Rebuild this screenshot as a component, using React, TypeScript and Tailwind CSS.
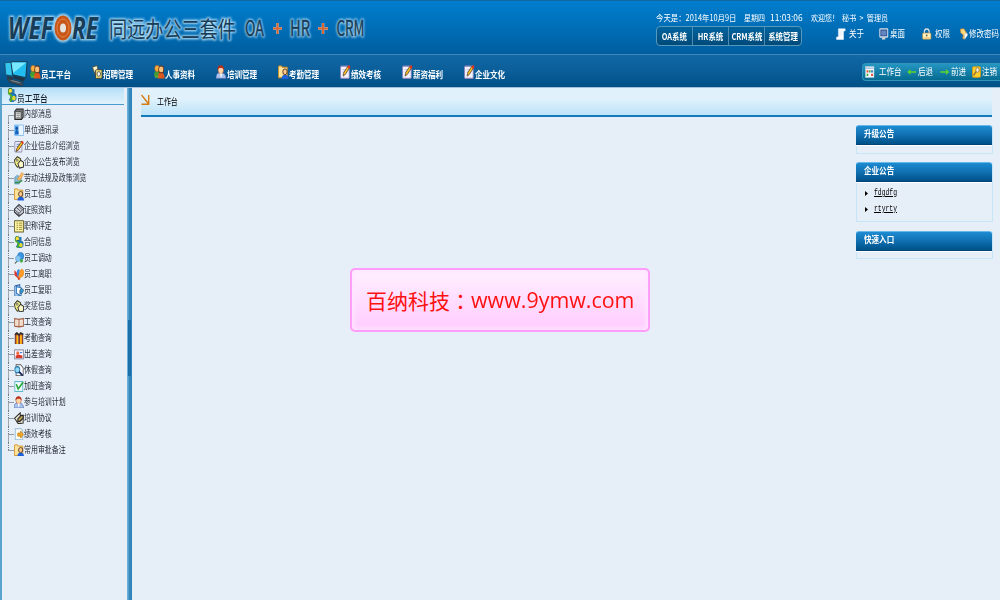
import React from 'react';

type IconName =
  | 'people' | 'badge' | 'worker' | 'folder' | 'note' | 'drive' | 'card' | 'pencil' | 'tags' | 'brush'
  | 'box' | 'sheet' | 'snake' | 'pin' | 'butterfly' | 'page' | 'book' | 'gift' | 'photo' | 'search'
  | 'check' | 'pen' | 'arrowpage' | 'scroll' | 'monitor' | 'lock' | 'hand' | 'grid' | 'left' | 'right' | 'key';

const shapes: Record<IconName, React.ReactNode> = {
  people: (<>
    <path d="M0 9.5c0-4 2-5 4-5s3 2 3 5z" fill="#3f9b35" /><circle cx="3.5" cy="3" r="2.7" fill="#f7b13c" stroke="#a0522d" strokeWidth=".6" />
    <path d="M4 11.5c0-4 2-5 4-5s4 1 4 5z" fill="#e0571c" /><circle cx="8.2" cy="3.8" r="2.9" fill="#f4c27c" stroke="#6b2c10" strokeWidth=".9" />
    <path d="M1 11h4V9H1z" fill="#5bab3d" />
  </>),
  badge: (<>
    <path d="M.5 2l5-1.5 3 7-4.5 1.5z" fill="#fff6cf" stroke="#4d4a31" strokeWidth=".8" /><rect x="4" y="4" width="7.5" height="7.5" rx="1" fill="#e8d973" stroke="#333" strokeWidth=".8" />
    <circle cx="7.7" cy="7.7" r="2" fill="#fff" stroke="#444" strokeWidth=".8" />
  </>),
  worker: (<>
    <path d="M0 11.5c0-4 2-5 5.5-5s6 2 6 5z" fill="#a9c2ec" stroke="#4a62a8" strokeWidth=".6" /><circle cx="5.5" cy="4.3" r="3.2" fill="#ffd5a5" stroke="#963c1d" strokeWidth=".5" />
    <path d="M1.7 4c0-5 7.5-5 7.5 0L7 2.6H4z" fill="#b92e18" /><path d="M4.5 7.3l1.3 4 1.3-4" fill="#fff" />
  </>),
  folder: (<>
    <path d="M.5 2V11h10V2H5L4 .8H1z" fill="#ffe29a" stroke="#d08a18" strokeWidth=".9" /><path d="M4 12c0-5 8-5 8 0z" fill="#1b60dc" /><circle cx="8" cy="5.8" r="2.5" fill="#ffc98a" stroke="#382116" strokeWidth=".8" />
  </>),
  note: (<>
    <rect x=".7" y="1" width="9.8" height="10.5" rx="1" fill="#f4f3ff" stroke="#8c86bd" /><path d="M3 4h5M3 6h4" stroke="#aaa6d0" strokeWidth=".7" />
    <path d="M3.5 9.5l.8-3L9 1l1.8 1.6L6 8.2z" fill="#f9bd26" stroke="#453426" strokeWidth=".7" /><circle cx="10.3" cy="1.7" r="1.5" fill="#e23420" />
  </>),
  drive: (<><path d="M1 3l2-2h8v8l-2 2H1z" fill="#777" stroke="#222" /><path d="M1.5 3.5h7v7h-7z" fill="#e5e5e5" stroke="#333" strokeWidth=".8" /><path d="M3 5h4M3 7h4M3 9h4" stroke="#555" strokeWidth=".8" /></>),
  card: (<><rect x=".5" y="1" width="11" height="10" rx=".8" fill="#eaf4ff" stroke="#8abfee" /><path d="M1 1.5h4.5v9H1z" fill="#4ca2eb" /><circle cx="3.3" cy="4.2" r="1.4" fill="#174a91" /><path d="M1.3 9.5c0-5 4.2-5 4.2 0z" fill="#1760bb" /></>),
  pencil: (<><rect x="1" y="1.5" width="8.5" height="10" rx="1" fill="#eeeef8" stroke="#8989ac" /><path d="M3 4h5M3 6h4" stroke="#6c86cf" /><path d="M2.5 11l1-3L9 1.5l2 1.5-5.5 6.5z" fill="#ffc21c" stroke="#4d3320" strokeWidth=".8" /><path d="M8.5 2L10 .6l1.7 1.6L10.5 4z" fill="#e5351e" /></>),
  tags: (<><path d="M.5 4L4 .7l4 2v6.8l-4 1.2L1.5 8z" fill="#f5ef83" stroke="#353525" /><path d="M4.7 7.3L8 4l3.4 2v4.5L6.5 11.5z" fill="#fffac9" stroke="#333" strokeWidth="1.1" /><circle cx="3.7" cy="4" r="1.1" fill="#fff" stroke="#333" strokeWidth=".7" /></>),
  brush: (<><path d="M1 5l3-2 5 3-3 5.5H1z" fill="#82b9d9" stroke="#5b8ca5" strokeWidth=".7" /><path d="M4 7L9.5 .5 11.5 2 7 8z" fill="#ffbc62" stroke="#d58d3c" strokeWidth=".7" /><path d="M1 10h5l4-2" stroke="#35914b" strokeWidth="1.4" fill="none" /></>),
  box: (<><path d="M.5 5L6 .5l5.7 4v3.5L6 11.8.5 8z" fill="#d6d9e0" stroke="#26282c" /><path d="M1 5.5l5 3.5 5.5-4.5M6 9v2.5M3 3.5l5 3.5M5 2l5 3.5M1 7.5l5 3.3" stroke="#3b3e48" fill="none" strokeWidth=".9" /></>),
  sheet: (<><path d="M.7 .7h10.6v10.8H.7z" fill="#fff7a4" stroke="#645d28" /><path d="M3 3h2M6 3h4M3 5h2M6 5h4M3 7h2M6 7h4M3 9h2M6 9h4" stroke="#8d7c2f" strokeWidth=".9" /></>),
  snake: (<><circle cx="4" cy="2.7" r="2.5" fill="#ffde3d" stroke="#287a37" strokeWidth=".9" /><path d="M3 4.5l2 2-2 4L6.5 12l4.3-2V6L7.5 4z" fill="#187fc1" stroke="#174d8d" strokeWidth=".8" /><path d="M1.5 4L5.5 7l-1 4 3-3" fill="none" stroke="#50ad2c" strokeWidth="1.8" /><circle cx="8.3" cy="8.7" r="2.1" fill="#e5d72c" /><path d="M6 1h3v3H7z" fill="#2577b8" /></>),
  pin: (<><path d="M1 11l5-4" stroke="#666" strokeWidth="1.3" /><circle cx="8" cy="4" r="3.6" fill="#3997e6" stroke="#1b66a7" strokeWidth=".7" /><circle cx="4.8" cy="6.3" r="3" fill="#84c7f6" stroke="#4b91c2" strokeWidth=".5" /><path d="M7.5 7c5-1 4 4 0 3z" fill="#42ad3a" /></>),
  butterfly: (<><path d="M5 10L.5 7V2L5 6z" fill="#e1372a" /><path d="M5 10C1 4 5-1 7 2z" fill="#3686e6" /><path d="M5 10.5L7 3c3-5 7 1 3.5 5z" fill="#ff9b25" stroke="#dd7916" strokeWidth=".5" /><path d="M4 7.5l4 3-3 1.5z" fill="#e44c25" /></>),
  page: (<><path d="M1 2l6-1.3v10.5L1 12z" fill="#b9dcff" stroke="#265da3" /><path d="M3 2.5l5.5 1v7.8L3 9z" fill="#fff" stroke="#3479bd" strokeWidth="1.1" /><path d="M7 6l2.3-2 2.5 2-2.3 3H7z" fill="#3596ce" stroke="#34516e" strokeWidth=".7" /></>),
  book: (<><path d="M.8 2.5L6 3.2l5.2-.7v7.3L6 10.3.8 9.8z" fill="#fff8ea" stroke="#a5644b" strokeWidth="1.3" /><path d="M6 3v7" stroke="#a5644b" strokeWidth="1.3" /><path d="M3.5 4v5M8.5 4v5" stroke="#e0b79d" /></>),
  gift: (<><path d="M1.5 2.5H5V11.5H1.5zM6 2.5h4.5v9H6z" fill="#d93424" stroke="#402b20" strokeWidth=".8" /><path d="M4 3v8.5M8.3 3v8.5" stroke="#ffc319" strokeWidth="2" /><path d="M1 2.5l2.5-1.7 2.5 2 2-2 3.3 1.5" stroke="#302420" strokeWidth="1.4" fill="none" /></>),
  photo: (<><rect x=".7" y="1.8" width="10.6" height="8.6" fill="#f8f7ff" stroke="#8d879b" /><path d="M2 9.5V7.5l3-1.3 5 1v2.3z" fill="#db3827" /><circle cx="4.5" cy="5" r="1.8" fill="#f06a49" /><path d="M7 4.4h3" stroke="#4180c5" /></>),
  search: (<><path d="M2.5 .7H8l3 3v7.6H2.5z" fill="#fff" stroke="#555" /><circle cx="4" cy="5.5" r="3" fill="#91d8f7" stroke="#2778ac" /><path d="M6 7.5l4.5 3.7" stroke="#172a61" strokeWidth="2" /></>),
  check: (<><rect x="1" y="1.5" width="9.5" height="9.5" fill="#effaff" stroke="#5db7c8" /><path d="M2.7 4l2.3 4.5 6-6.5" stroke="#29a830" strokeWidth="1.8" fill="none" /></>),
  pen: (<><path d="M.7 6L7.5 .8v2.3l3.5.5v7L5 11.2z" fill="#f2efdb" stroke="#343434" strokeWidth="1.2" /><path d="M4.5 6.5l3.5-3 3-.5v3L7.5 9l-3 .5z" fill="#7f7353" stroke="#25221c" /><path d="M6 7.5l4-3" stroke="#e1c252" /></>),
  arrowpage: (<><path d="M1.5 .7h7l2 2v8.6h-9z" fill="#fffdf3" stroke="#93b9dc" /><path d="M11.3 6.3L8 9.8V7.8H4.5V4.8H8v-2z" fill="#f2a827" stroke="#b87915" strokeWidth=".7" /></>),
  scroll: (<><path d="M3 .8h8.5V3H9.5v8.5H.7V9H3z" fill="#fff" stroke="#d5e7fa" strokeWidth=".7" /><path d="M4 3h4M4 5h4M4 7h4" stroke="#c3d5e9" strokeWidth=".6" /></>),
  monitor: (<><rect x="1" y=".8" width="10" height="8.2" rx=".5" fill="#335d98" stroke="#d4dbe9" strokeWidth="1.3" /><path d="M3 2.7h6v4.5H3z" fill="#6586c0" /><path d="M4 9.4h4v2H3.5z" fill="#d8d6ce" /></>),
  lock: (<><path d="M3 6V3.5c0-3.5 6-3.5 6 0V6" fill="none" stroke="#ddd" strokeWidth="1.5" /><rect x=".7" y="5" width="10.6" height="6.3" rx="1" fill="#fff1bd" stroke="#a88c42" strokeWidth=".7" /><path d="M2 10h8" stroke="#ddae55" /><circle cx="6" cy="7.5" r="1" fill="#69533a" /></>),
  hand: (<><path d="M.5 1L6 .8l4 4.5-4 6-2-1 1-3.3-4-2.3z" fill="#ffd77b" stroke="#bd7931" strokeWidth=".7" /><path d="M7 6l3.5-1 1 2-4.5 4.5z" fill="#fff" stroke="#a9b6bf" strokeWidth=".5" /></>),
  grid: (<><rect x=".7" y=".7" width="10.6" height="10.6" fill="#f5fbff" stroke="#bdd5df" strokeWidth=".7" /><path d="M1 2.2h10" stroke="#a9bfdc" strokeWidth="1.4" /><path d="M2 4.3h2.2v2.3H2zM7.7 7.8H10v2.3H7.7z" fill="#e44a2c" /><path d="M4.9 4.3h2.2v2.3H4.9zM2 7.8h2.2v2.3H2z" fill="#4da54c" /><path d="M7.7 4.3H10v2.3H7.7z" fill="#377fc7" /></>),
  left: <path d="M11.5 6H1.5M4.5 3.8L1.5 6l3 2.2" fill="none" stroke="#5ed72b" strokeWidth="1.3" />,
  right: <path d="M.5 6h10M7.5 3.8l3 2.2-3 2.2" fill="none" stroke="#5ed72b" strokeWidth="1.3" />,
  key: (<><rect x=".8" y=".8" width="10.4" height="10.5" rx="1" fill="#ffd12e" stroke="#db990e" /><path d="M2 9.5L6 5" stroke="#906b31" strokeWidth="1.7" /><circle cx="7.3" cy="4" r="2.3" fill="#fff4d7" stroke="#8a744c" /></>),
};

function Icon({ name, className }: { name: IconName; className: string }) {
  return <svg viewBox="0 0 12 12" preserveAspectRatio="none" className={`shrink-0 ${className}`}>{shapes[name]}</svg>;
}

const tabs: [string, IconName][] = [
  ['员工平台', 'people'], ['招聘管理', 'badge'], ['人事资料', 'people'], ['培训管理', 'worker'],
  ['考勤管理', 'folder'], ['绩效考核', 'note'], ['薪资福利', 'note'], ['企业文化', 'note'],
];

const menu: [string, IconName][] = [
  ['内部消息', 'drive'], ['单位通讯录', 'card'], ['企业信息介绍浏览', 'pencil'], ['企业公告发布浏览', 'tags'],
  ['劳动法规及政策浏览', 'brush'], ['员工信息', 'folder'], ['证照资料', 'box'], ['职称评定', 'sheet'],
  ['合同信息', 'snake'], ['员工调动', 'pin'], ['员工离职', 'butterfly'], ['员工复职', 'page'],
  ['奖惩信息', 'tags'], ['工资查询', 'book'], ['考勤查询', 'gift'], ['出差查询', 'photo'],
  ['休假查询', 'search'], ['加班查询', 'check'], ['参与培训计划', 'worker'], ['培训协议', 'pen'],
  ['绩效考核', 'arrowpage'], ['常用审批备注', 'folder'],
];

function Logo() {
  return (
    <svg viewBox="0 0 370 50" className="h-[50px] w-[370px] shrink-0">
      <defs>
        <filter id="glow" x="-10%" y="-30%" width="120%" height="160%"><feGaussianBlur stdDeviation=".9" /></filter>
        <g id="brand" fontFamily="Open Sans, sans-serif" fontWeight="700" fontStyle="italic" fontSize="31">
          <text x="8" y="38" textLength="45" lengthAdjust="spacingAndGlyphs">WEF</text>
          <text x="72" y="38" textLength="26" lengthAdjust="spacingAndGlyphs">RE</text>
        </g>
        <g id="suite" fontFamily="Noto Sans CJK SC, sans-serif" fontSize="22">
          <text x="109" y="35.5" textLength="127" lengthAdjust="spacingAndGlyphs">同远办公三套件</text>
        </g>
        <g id="latin" fontFamily="Noto Sans CJK SC, sans-serif" fontSize="22">
          <text x="245" y="35" textLength="19" lengthAdjust="spacingAndGlyphs">OA</text>
          <text x="290" y="35" textLength="20" lengthAdjust="spacingAndGlyphs">HR</text>
          <text x="336.5" y="35" textLength="28" lengthAdjust="spacingAndGlyphs">CRM</text>
        </g>
      </defs>
      <g stroke="#b5e2fb" strokeWidth="2.4" fill="#b5e2fb" filter="url(#glow)" opacity=".95" aria-hidden="true">
        <use href="#brand" /><use href="#suite" /><use href="#latin" />
        <ellipse cx="63" cy="27" rx="9" ry="13" />
      </g>
      <g fill="#173d59"><use href="#brand" /><use href="#suite" stroke="#173d59" strokeWidth=".1" /><use href="#latin" stroke="#173d59" strokeWidth=".5" /></g>
      <ellipse cx="63" cy="27" rx="8.5" ry="12.5" fill="#c75619" />
      <ellipse cx="63" cy="27" rx="6" ry="9" fill="none" stroke="#ef8b4b" strokeWidth=".8" />
      <ellipse cx="63" cy="27" rx="3" ry="4.5" fill="#e7e4df" />
      <path d="M273 27.5h9M277.5 22v11M318 27.5h10M323 22v11" stroke="#9fc5dd" strokeWidth="2.8" />
      <path d="M273 27.5h9M277.5 22v11M318 27.5h10M323 22v11" stroke="#dc632a" strokeWidth="1.9" />
    </svg>
  );
}

function Computers() {
  return (
    <svg viewBox="0 0 28 30" preserveAspectRatio="none" className="h-[28px] w-[26px] shrink-0">
      <path d="M2 4l8-.5v14.5L3 17z" fill="#35c6ef" stroke="#17425d" strokeWidth=".7" />
      <path d="M4 18l7 1.5v4l-6-1z" fill="#253c4b" />
      <path d="M8.5 3L26 3l-1.5 17-14-3z" fill="#22bdee" stroke="#152f44" />
      <path d="M9.3 3.8L25 3.8 11 15z" fill="#77e8ff" />
      <path d="M11 18l13 2.7-1.5 3.3-11-3z" fill="#203543" />
      <path d="M4.5 21L21.5 25 21 29 7 25z" fill="#3f4d57" stroke="#24394a" strokeWidth=".7" />
      <path d="M9 23l9 2.3" stroke="#9aa4aa" strokeWidth=".8" />
    </svg>
  );
}

function Utility({ icon, text, className }: { icon: IconName; text: string; className: string }) {
  return (
    <div className={`flex items-center gap-px ${className}`}>
      <Icon name={icon} className="h-[12px] w-[9.5px]" />
      <span className="origin-left scale-x-[.83] text-[9px] leading-3">{text}</span>
    </div>
  );
}

function Panel({ title, className, children }: { title: string; className: string; children?: React.ReactNode }) {
  return (
    <section className={`flex w-[137px] flex-col rounded-t-[3px] border border-t-0 border-[#c8e4f7] ${className}`}>
      <h2 className="-ml-px h-5 w-[136px] shrink-0 rounded-t-[3px] border-t border-b border-t-[#66b8e8] border-b-[#00447a] bg-linear-to-b from-[#1d8bd2] from-0% via-[#1070b1] via-50% to-[#005188] pl-2 text-[9px] leading-[16px] font-bold text-white">
        <span className="inline-block origin-left scale-x-[.84]">{title}</span>
      </h2>
      <span className="-ml-px h-px shrink-0 bg-white" />
      {children}
    </section>
  );
}

export default function App() {
  return (
    <div className="flex h-[600px] w-[1000px] flex-col overflow-hidden bg-[#e6eef8] font-['Noto_Sans_CJK_SC',sans-serif] whitespace-nowrap text-[#252b36]">
      <header className="flex h-[55px] shrink-0 justify-between border-t border-b border-t-[#12679e] border-b-[#3f86b4] bg-linear-to-b from-[#007ecf] to-[#005e9f] text-white">
        <Logo />
        <div className="w-[344px] pt-2.5">
          <div className="flex h-[13px] items-center text-[8.5px] leading-[13px]">
            <span className="w-[88px]"><span className="inline-block origin-left scale-x-[.87]">今天是：2014年10月9日</span></span>
            <span className="w-[26px]"><span className="inline-block origin-left scale-x-[.82]">星期四</span></span>
            <span className="w-[41px]"><span className="inline-block origin-left scale-x-[.99]">11:03:06</span></span>
            <span className="w-[31px]"><span className="inline-block origin-left scale-x-[.82]">欢迎您！</span></span>
            <span className="inline-block origin-left scale-x-[.84] [word-spacing:2px]">秘书 &gt; 管理员</span>
          </div>
          <div className="flex items-start pt-0.5">
            <nav className="flex h-5 w-[146px] shrink-0 overflow-hidden rounded border border-[#5798bd] bg-linear-to-b from-[#00649f] to-[#004a79] text-[9px] leading-[19px] font-bold">
              {['OA系统', 'HR系统', 'CRM系统', '系统管理'].map((label) => (
                <span key={label} className="flex w-9 grow justify-center border-r border-[#508db4] last:border-r-0"><span className="scale-x-[.82]">{label}</span></span>
              ))}
            </nav>
            <Utility icon="scroll" text="关于" className="ml-[34px] w-[43px] shrink-0 pt-0.5 [&_span]:ml-0.5" />
            <Utility icon="monitor" text="桌面" className="w-[43px] shrink-0 pt-0.5" />
            <Utility icon="lock" text="权限" className="w-[38px] shrink-0 pt-0.5 [&_span]:ml-0.5" />
            <Utility icon="hand" text="修改密码" className="w-10 shrink-0 pt-0.5 [&_svg]:w-[8px]" />
          </div>
        </div>
      </header>

      <div className="flex h-[33px] shrink-0 border-b border-[#9fc2da] bg-linear-to-b from-[#1168a6] from-0% via-[#0a5e99] via-50% to-[#005087] text-white">
        <div className="flex w-[30px] items-end pl-[3px]"><Computers /></div>
        <nav className="flex pt-2.5">
          {tabs.map(([label, icon]) => (
            <div key={label} className="flex w-[62px] items-start">
              <Icon name={icon} className="h-[14px] w-[10.5px]" />
              <span className="origin-left scale-x-[.82] pt-[3px] text-[9.2px] leading-3 font-bold">{label}</span>
            </div>
          ))}
        </nav>
        <div className="mt-2 ml-auto flex h-[18px] w-[138px] items-center rounded-l-sm border border-r-0 border-[#3295b9] bg-linear-to-b from-[#2496c1] to-[#046b91] pl-[2px]">
          <Utility icon="grid" text="工作台" className="w-[42px] [&_span]:ml-[3px]" />
          <Utility icon="left" text="后退" className="w-[33px]" />
          <Utility icon="right" text="前进" className="w-[32px]" />
          <Utility icon="key" text="注销" className="[&_svg]:w-[9px]" />
        </div>
      </div>

      <div className="flex min-h-0 flex-1">
        <aside className="flex w-[127px] shrink-0 flex-col border-l-2 border-[#5aa4cd]">
          <h1 className="mr-[3px] flex h-[17px] shrink-0 items-center border-b border-[#4a9bce] bg-linear-to-b from-[#b7e0f8] to-[#e1f2fc] pl-[5px] text-[9.5px] leading-4 font-medium text-[#17212c]">
            <Icon name="snake" className="mb-0.5 h-[14px] w-[10px]" />
            <span className="origin-left scale-x-[.81] pt-1">员工平台</span>
          </h1>
          <ul className="flex flex-col pt-[1.5px] pl-1.5">
            {menu.map(([label, icon], i) => (
              <li key={label} className="flex h-[15.97px] items-center">
                <span className={`flex h-full w-[6px] flex-col ${i === 0 ? 'pt-2' : ''}`}>
                  {i > 0 && <span className="h-1/2 border-l border-dotted border-[#717986]" />}
                  <span className={`flex-1 border-t border-t-[#929aa5] ${i < menu.length - 1 ? 'border-l border-l-[#a0a7b1]' : ''}`} />
                </span>
                <Icon name={icon} className="h-[12.5px] w-[10px]" />
                <span className="origin-left scale-x-[.79] text-[8.8px] leading-4">{label}</span>
              </li>
            ))}
          </ul>
        </aside>
        <div className="flex w-[5px] shrink-0 items-start bg-linear-to-r from-[#7ab9dc] via-[#3989bd] to-[#2b7eb7] pt-[232px] pl-px">
          <span className="h-[56px] w-[3px] bg-[#1a70a8]" />
        </div>
        <main className="flex min-w-0 flex-1 flex-col pr-[7px] pl-[9px]">
          <div className="mr-px flex h-[29px] shrink-0 items-start border-b-2 border-[#137bbb] bg-linear-to-b from-[#e0f1fc] from-40% to-[#bde3f8]">
            <svg viewBox="0 0 9 12" className="mt-[6px] h-3 w-[9px]"><path d="M.5 1l6.8 8.5M7.7 1v9.3H.5" fill="none" stroke="#d77c10" strokeWidth="1.4" /></svg>
            <span className="mt-2 ml-[7px] origin-left scale-x-[.77] text-[9px] leading-3 text-black">工作台</span>
          </div>
          <div className="flex flex-1 justify-between">
            <div className="mt-[151px] ml-[209px] flex h-16 w-[300px] items-center rounded-[5px] border-2 border-[#ff9dfb] bg-linear-to-b from-[#fff0ff] to-[#ffcbff] pt-0.5 pl-[14px] text-[21px] text-[#ff1111] shadow-[inset_0_0_4px_2px_#ffe6ff]">
              <span className="w-[105px] font-['Noto_Sans_CJK_TC',sans-serif]">百纳科技：</span>
              <span className="origin-left scale-x-[1.02] font-['Open_Sans',sans-serif]">www.9ymw.com</span>
            </div>
            <div className="flex flex-col pt-2">
              <Panel title="升级公告" className="h-[29px]" />
              <Panel title="企业公告" className="mt-2 h-[60px]">
                <ul className="pt-0.5 pl-2 font-['Liberation_Mono',monospace] text-[8.3px] text-black">
                  {['fdgdfg', 'rtyrty'].map((label) => (
                    <li key={label} className="flex h-4 items-center">
                      <svg viewBox="0 0 3 5" className="mr-[6px] h-[5px] w-[3px]"><path d="M0 0l3 2.5L0 5z" /></svg>
                      <a className="origin-left scale-x-[.77] underline">{label}</a>
                    </li>
                  ))}
                </ul>
              </Panel>
              <Panel title="快速入口" className="mt-[9px] h-7" />
            </div>
          </div>
        </main>
      </div>
    </div>
  );
}
